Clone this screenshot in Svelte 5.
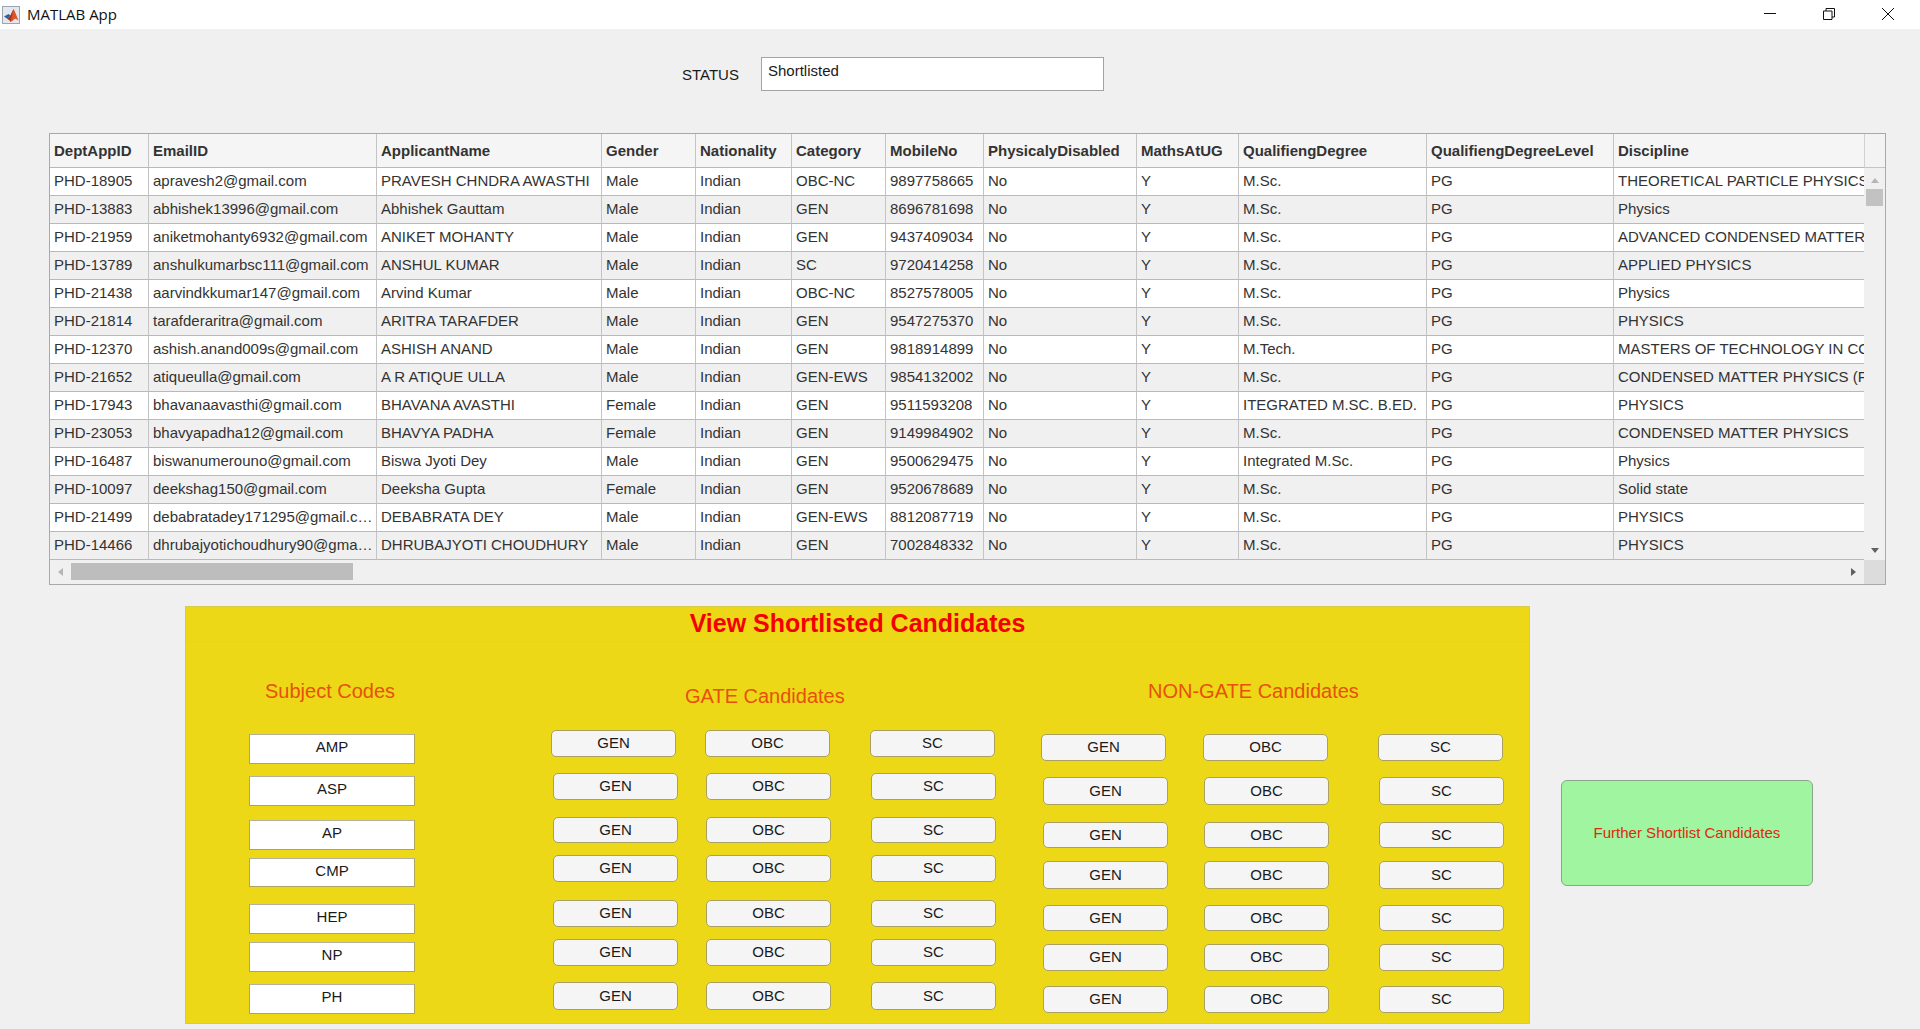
<script>
  const columns = [
    ['DeptAppID', 99], ['EmailID', 228], ['ApplicantName', 225], ['Gender', 94], ['Nationality', 96],
    ['Category', 94], ['MobileNo', 98], ['PhysicalyDisabled', 153], ['MathsAtUG', 102],
    ['QualifiengDegree', 188], ['QualifiengDegreeLevel', 187], ['Discipline', 250]
  ];
  const rows = [
    ['PHD-18905','apravesh2@gmail.com','PRAVESH CHNDRA AWASTHI','Male','OBC-NC','9897758665','M.Sc.','THEORETICAL PARTICLE PHYSICS'],
    ['PHD-13883','abhishek13996@gmail.com','Abhishek Gauttam','Male','GEN','8696781698','M.Sc.','Physics'],
    ['PHD-21959','aniketmohanty6932@gmail.com','ANIKET MOHANTY','Male','GEN','9437409034','M.Sc.','ADVANCED CONDENSED MATTER'],
    ['PHD-13789','anshulkumarbsc111@gmail.com','ANSHUL KUMAR','Male','SC','9720414258','M.Sc.','APPLIED PHYSICS'],
    ['PHD-21438','aarvindkkumar147@gmail.com','Arvind Kumar','Male','OBC-NC','8527578005','M.Sc.','Physics'],
    ['PHD-21814','tarafderaritra@gmail.com','ARITRA TARAFDER','Male','GEN','9547275370','M.Sc.','PHYSICS'],
    ['PHD-12370','ashish.anand009s@gmail.com','ASHISH ANAND','Male','GEN','9818914899','M.Tech.','MASTERS OF TECHNOLOGY IN CO'],
    ['PHD-21652','atiqueulla@gmail.com','A R ATIQUE ULLA','Male','GEN-EWS','9854132002','M.Sc.','CONDENSED MATTER PHYSICS (F'],
    ['PHD-17943','bhavanaavasthi@gmail.com','BHAVANA AVASTHI','Female','GEN','9511593208','ITEGRATED M.SC. B.ED.','PHYSICS'],
    ['PHD-23053','bhavyapadha12@gmail.com','BHAVYA PADHA','Female','GEN','9149984902','M.Sc.','CONDENSED MATTER PHYSICS'],
    ['PHD-16487','biswanumerouno@gmail.com','Biswa Jyoti Dey','Male','GEN','9500629475','Integrated M.Sc.','Physics'],
    ['PHD-10097','deekshag150@gmail.com','Deeksha Gupta','Female','GEN','9520678689','M.Sc.','Solid state'],
    ['PHD-21499','debabratadey171295@gmail.c…','DEBABRATA DEY','Male','GEN-EWS','8812087719','M.Sc.','PHYSICS'],
    ['PHD-14466','dhrubajyotichoudhury90@gma…','DHRUBAJYOTI CHOUDHURY','Male','GEN','7002848332','M.Sc.','PHYSICS']
  ];

  const bodyTop = 642;
  const headH = 24;

  function buildCol(label, firstX, restX, tops, heights, prevRight, w) {
    const colX = Math.min(firstX, restX);
    const span = Math.max(firstX, restX) - colX + w;
    return { colX, span, gap: colX - prevRight, items: tops.map((y, i) => ({
      label: Array.isArray(label) ? label[i] : label,
      x: (i === 0 ? firstX : restX) - colX,
      y, h: heights[i]
    })) };
  }

  function spaced(col, start) {
    let end = start;
    col.items.forEach((it) => { it.mt = it.y - end; end = it.y + it.h; });
    return col;
  }

  function group(title, titleX, titleY, x, width, colDefs) {
    const start = titleY + headH;
    let prev = x;
    const cols = colDefs.map(([label, a, b, tops, hs, w]) => {
      const c = spaced(buildCol(label, a, b, tops, hs, prev, w), start);
      prev = c.colX + c.span;
      return c;
    });
    return { title, pad: titleX - x, mt: titleY - bodyTop, width, cols };
  }

  const gateT = [730, 773, 817, 855, 900, 939, 982];
  const gateH = [27, 27, 26, 27, 27, 27, 28];
  const nonT = [734, 777, 822, 861, 905, 944, 986];
  const nonH = [27, 28, 26, 28, 26, 27, 27];
  const codeT = [734, 776, 820, 858, 904, 942, 984];
  const codeH = [30, 30, 30, 29, 30, 30, 30];

  const groups = [
    { ...group('Subject Codes', 265, 679, 186, 365, [[['AMP','ASP','AP','CMP','HEP','NP','PH'], 249, 249, codeT, codeH, 166]]), kind: 'code' },
    { ...group('GATE Candidates', 685, 684, 551, 490, [
      ['GEN', 551, 553, gateT, gateH, 125], ['OBC', 705, 706, gateT, gateH, 125], ['SC', 870, 871, gateT, gateH, 125]]), kind: 'btn' },
    { ...group('NON-GATE Candidates', 1148, 679, 1041, 488, [
      ['GEN', 1041, 1043, nonT, nonH, 125], ['OBC', 1203, 1204, nonT, nonH, 125], ['SC', 1378, 1379, nonT, nonH, 125]]), kind: 'btn' }
  ];
</script>

<div class="window">
  <header class="titlebar">
    <svg class="logo" viewBox="0 0 18 18" aria-hidden="true">
      <rect x="0.5" y="0.5" width="17" height="17" fill="#e4e8ee" stroke="#9aa5b1" />
      <path d="M2 10.5 6.5 8 8.5 9.5 5.5 13z" fill="#2f5f9e" />
      <path d="M8.5 9.5 11.5 3C12.5 4 15 11 16.5 14.5 15 13.5 13.5 12 12.5 13 11 14.5 9.5 15.5 8.5 16 8 14 6.5 13.8 5.5 13z" fill="#d9562a" />
      <path d="M8.5 9.5 11.5 3C10.8 6 10 10 8.5 16 8 14 6.5 13.8 5.5 13z" fill="#a8331a" />
    </svg>
    <span class="apptitle">MATLAB App</span>
    <div class="winbtns">
      <svg viewBox="0 0 12 12" width="12" height="12" aria-hidden="true"><path d="M0 5.5H12" stroke="#111" fill="none" /></svg>
      <svg viewBox="0 0 12 12" width="12" height="12" aria-hidden="true"><path d="M.5 3H9V11.5H.5zM3 3V.5H11.5V9H9" stroke="#111" fill="none" /></svg>
      <svg viewBox="0 0 12 12" width="12" height="12" aria-hidden="true"><path d="M0 0 12 12M12 0 0 12" stroke="#111" fill="none" /></svg>
    </div>
  </header>

  <div class="status">
    <span class="status-label">STATUS</span>
    <div class="status-input">Shortlisted</div>
  </div>

  <div class="frame">
    <div class="tablewrap">
      <table>
        <colgroup>
          {#each columns as c}<col style="width:{c[1]}px" />{/each}
        </colgroup>
        <thead>
          <tr>{#each columns as c}<th>{c[0]}</th>{/each}</tr>
        </thead>
        <tbody>
          {#each rows as r}
            <tr>
              <td>{r[0]}</td>
              <td>{r[1]}</td>
              <td>{r[2]}</td>
              <td>{r[3]}</td>
              <td>Indian</td>
              <td>{r[4]}</td>
              <td>{r[5]}</td>
              <td>No</td>
              <td>Y</td>
              <td>{r[6]}</td>
              <td>PG</td>
              <td class="last">{r[7]}</td>
            </tr>
          {/each}
        </tbody>
      </table>
    </div>
    <div class="vscroll">
      <div class="corner-top"></div>
      <span class="arrow up"></span>
      <div class="vthumb"></div>
      <span class="arrow down"></span>
    </div>
    <div class="hscroll">
      <span class="arrow left"></span>
      <div class="hthumb"></div>
      <span class="arrow right"></span>
    </div>
    <div class="corner"></div>
  </div>

  <div class="lower">
    <section class="panel">
      <h2>View Shortlisted Candidates</h2>
      <div class="board">
        {#each groups as g}
          <div class="group" style="width:{g.width}px">
            <h3 style="margin-top:{g.mt}px;padding-left:{g.pad}px">{g.title}</h3>
            <div class="cols">
              {#each g.cols as c}
                <div class="col" style="margin-left:{c.gap}px;width:{c.span}px">
                  {#each c.items as it}
                    <div class={g.kind} style="margin-top:{it.mt}px;margin-left:{it.x}px;height:{it.h}px">{it.label}</div>
                  {/each}
                </div>
              {/each}
            </div>
          </div>
        {/each}
      </div>
    </section>
    <div class="further">Further Shortlist Candidates</div>
  </div>
</div>

<style>
  :global(body) {
    margin: 0;
    background: #f0f0f0;
  }
  .window {
    width: 1920px;
    height: 1029px;
    overflow: hidden;
    font-family: "Liberation Sans", Arial, sans-serif;
    font-size: 15px;
    color: #222;
    background: #f0f0f0;
  }
  .titlebar {
    height: 29px;
    background: #fff;
    display: flex;
    align-items: center;
    padding-left: 2px;
    box-sizing: border-box;
  }
  .logo {
    width: 18px;
    height: 18px;
  }
  .apptitle {
    font-family: "Open Sans", "Noto Sans", sans-serif;
    font-size: 15px;
    margin-left: 7px;
    color: #111;
    margin-top: -1px;
  }
  .winbtns {
    margin-left: auto;
    display: flex;
    gap: 47px;
    padding-right: 26px;
    margin-top: -1px;
  }
  .status {
    display: flex;
    margin-left: 682px;
    padding-top: 28px;
    height: 76px;
  }
  .status-label {
    width: 79px;
    line-height: 34px;
    padding-top: 1px;
    height: 33px;
    color: #1a1a1a;
  }
  .status-input {
    width: 343px;
    height: 34px;
    box-sizing: border-box;
    border: 1px solid #a3a3a3;
    background: #fff;
    padding: 4px 0 0 6px;
    line-height: 17px;
    color: #1a1a1a;
  }
  .frame {
    margin-left: 49px;
    width: 1837px;
    height: 452px;
    box-sizing: border-box;
    border: 1px solid #a9a9a9;
    display: grid;
    grid-template-columns: 1814px 21px;
    grid-template-rows: 426px 24px;
    background: #f0f0f0;
  }
  .tablewrap {
    overflow: hidden;
  }
  table {
    border-collapse: separate;
    border-spacing: 0;
    table-layout: fixed;
    width: 1814px;
  }
  th, td {
    box-sizing: border-box;
    white-space: nowrap;
    overflow: hidden;
    text-align: left;
    padding: 0 0 0 4px;
    border-right: 1px solid #c4c4c4;
    border-bottom: 1px solid #b9b9b9;
  }
  th {
    height: 34px;
    background: #f5f5f5;
    font-weight: 700;
    color: #333;
    font-size: 15px;
  }
  td {
    height: 28px;
    padding-bottom: 3px;
    color: #333;
    background: #fff;
  }
  tbody tr:nth-child(even) td {
    background: #f0f0f0;
  }
  th:last-child, td.last {
    border-right: 0;
  }
  .vscroll {
    display: flex;
    flex-direction: column;
    align-items: center;
  }
  .corner-top {
    align-self: stretch;
    height: 34px;
    background: #f3f3f3;
    border-left: 1px solid #d0d0d0;
    border-bottom: 1px solid #c4c4c4;
    box-sizing: border-box;
  }
  .vthumb {
    width: 17px;
    height: 17px;
    background: #c2c2c2;
    margin-top: 6px;
  }
  .arrow {
    width: 0;
    height: 0;
    display: block;
    border-style: solid;
    border-color: transparent;
  }
  .arrow.up {
    margin-top: 10px;
    border-width: 0 4px 5px;
    border-bottom-color: #b5b5b5;
  }
  .arrow.down {
    margin-top: auto;
    margin-bottom: 7px;
    border-width: 5px 4px 0;
    border-top-color: #606060;
  }
  .hscroll {
    display: flex;
    align-items: center;
    padding-left: 8px;
    padding-right: 8px;
  }
  .arrow.left {
    border-width: 4px 5px 4px 0;
    border-right-color: #b5b5b5;
  }
  .arrow.right {
    margin-left: auto;
    border-width: 4px 0 4px 5px;
    border-left-color: #606060;
  }
  .hthumb {
    width: 282px;
    height: 17px;
    background: #bdbdbd;
    margin-left: 8px;
    margin-top: -1px;
  }
  .corner {
    background: #dcdcdc;
  }
  .lower {
    display: flex;
    align-items: flex-start;
    margin-top: 21px;
    margin-left: 185px;
  }
  .panel {
    width: 1345px;
    height: 418px;
    box-sizing: border-box;
    background: #ecd816;
    border: 1px solid #d8ca4a;
    border-bottom-color: #dccd2c;
  }
  h2 {
    margin: 0;
    height: 35px;
    box-sizing: border-box;
    border-bottom: 1px solid #dccf55;
    text-align: center;
    font-size: 25px;
    line-height: 33px;
    font-weight: 700;
    color: #f50000;
  }
  .board {
    display: flex;
  }
  .group {
    flex: none;
  }
  h3 {
    margin: 0;
    font-size: 20px;
    font-weight: 400;
    line-height: 24px;
    height: 24px;
    color: #e8500c;
    white-space: nowrap;
  }
  .cols {
    display: flex;
  }
  .col {
    flex: none;
  }
  .btn {
    width: 125px;
    box-sizing: border-box;
    background: #f5f5f5;
    border: 1px solid #aaa062;
    border-radius: 5px;
    display: flex;
    align-items: center;
    justify-content: center;
    color: #1a1a1a;
    padding-bottom: 2px;
  }
  .code {
    width: 166px;
    box-sizing: border-box;
    background: #fff;
    border: 1px solid #aea55f;
    border-top-color: #b5b19a;
    display: flex;
    align-items: center;
    justify-content: center;
    color: #1a1a1a;
    padding-bottom: 5px;
  }
  .further {
    width: 252px;
    height: 106px;
    box-sizing: border-box;
    margin-left: 31px;
    margin-top: 174px;
    background: #a0f5a0;
    border: 1px solid #8aa58a;
    border-radius: 6px;
    display: flex;
    align-items: center;
    justify-content: center;
    color: #dd2a10;
    padding-bottom: 1px;
  }
</style>
